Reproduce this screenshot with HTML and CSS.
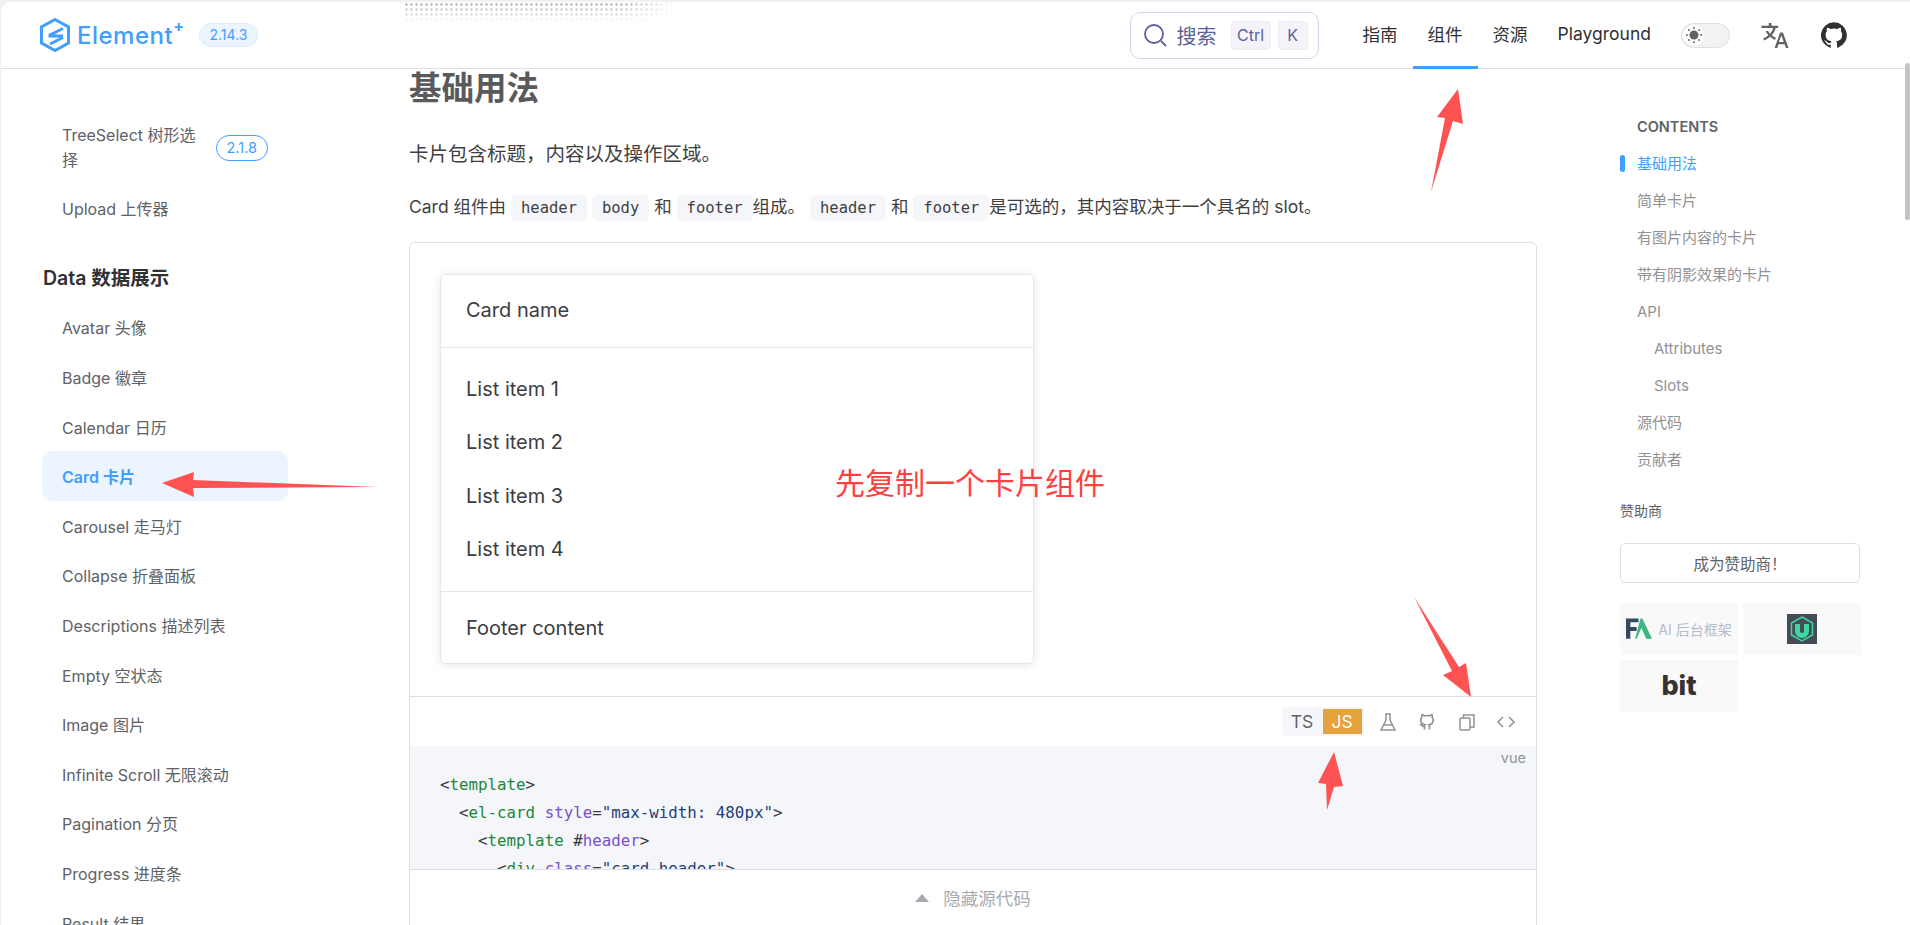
FILE: index.html
```html
<!DOCTYPE html>
<html lang="zh-CN">
<head>
    <meta charset="UTF-8">
    <meta name="viewport" content="width=device-width, initial-scale=1.0">
    <title>Card 卡片 | Element Plus</title>
    <link rel="stylesheet" href="styles.css">
</head>
<body>
    <div class="page">
        <!-- Top navigation -->
        <header class="navbar">
            <div class="brand">
                <svg class="brand-logo" viewBox="0 0 30 34" width="30" height="34" fill="none" stroke="#409eff">
                    <path d="M15 1.500 28.500 9v16L15 32.500 1.500 25V9z" stroke-width="3"/>
                    <path d="M23 10.500 10 17v1h13M23 19.500 10 26" stroke-width="3"/>
                </svg>
                <span class="brand-name">Element<sup>+</sup></span>
                <span class="version">2.14.3</span>
            </div>
            <div class="dots"></div>
            <div class="nav-right">
                <div class="search">
                    <svg viewBox="0 0 24 24" width="24" height="24" fill="none" stroke="#5c5f9e" stroke-width="1.800">
                        <circle cx="11" cy="11" r="9"/>
                        <path d="m18 18 5 5"/>
                    </svg>
                    <span class="search-text">搜索</span>
                    <span class="key key-ctrl">Ctrl</span>
                    <span class="key key-k">K</span>
                </div>
                <nav class="nav-links">
                    <a class="nav-link">指南</a>
                    <a class="nav-link active">组件</a>
                    <a class="nav-link">资源</a>
                    <a class="nav-link">Playground</a>
                </nav>
                <div class="theme-switch">
                    <span class="theme-knob">
                        <svg viewBox="0 0 24 24" width="18" height="18" fill="#606266">
                            <circle cx="12" cy="12" r="6"/>
                            <circle cx="12" cy="2.500" r="1.300"/>
                            <circle cx="12" cy="21.500" r="1.300"/>
                            <circle cx="2.500" cy="12" r="1.300"/>
                            <circle cx="21.500" cy="12" r="1.300"/>
                            <circle cx="5.300" cy="5.300" r="1.300"/>
                            <circle cx="18.700" cy="5.300" r="1.300"/>
                            <circle cx="5.300" cy="18.700" r="1.300"/>
                            <circle cx="18.700" cy="18.700" r="1.300"/>
                        </svg>
                    </span>
                </div>
                <svg class="translate-icon" viewBox="0 0 26 24" width="28" height="25" fill="#606266">
                    <path d="M7 0h2.600v2.600H16v2.200h-2.300c-.7 2.700-2 5-3.700 6.900 1.200 1 2.500 1.900 3.900 2.500l-.9 2.100c-1.700-.8-3.200-1.800-4.600-3-1.700 1.500-3.700 2.700-5.900 3.600l-.8-2.100c1.900-.7 3.600-1.800 5-3.100C5.500 10.500 4.600 9.100 4 7.700h2.400c.5 1 1.100 1.900 1.900 2.700 1.300-1.500 2.300-3.400 2.900-5.600H0V2.600h7z"/>
                    <path d="M18 9h2.600L26 24h-2.500l-1.300-3.700h-5.800L15.100 24h-2.500zm-1.300 9.200h4.700L19.100 12z"/>
                </svg>
                <svg class="github-icon" viewBox="0 0 24 24" width="26" height="26" fill="#303133">
                    <path d="M12 .300a12 12 0 0 0-3.800 23.400c.6.100.8-.3.800-.6v-2.200c-3.300.7-4-1.400-4-1.400-.6-1.400-1.400-1.800-1.400-1.800-1.100-.7.100-.7.100-.7 1.200.1 1.800 1.200 1.800 1.200 1.100 1.800 2.800 1.300 3.500 1 .1-.8.400-1.300.8-1.600-2.700-.3-5.500-1.300-5.500-5.900 0-1.300.5-2.400 1.200-3.200-.1-.3-.5-1.500.1-3.200 0 0 1-.3 3.300 1.200a11.500 11.500 0 0 1 6 0c2.300-1.500 3.300-1.200 3.300-1.200.7 1.700.2 2.900.1 3.200.8.800 1.200 1.900 1.200 3.200 0 4.600-2.800 5.600-5.500 5.900.4.400.8 1.100.8 2.200v3.300c0 .3.200.7.800.6A12 12 0 0 0 12 .300"/>
                </svg>
            </div>
        </header>

        <div class="layout">
            <!-- Component list -->
            <aside class="sidebar">
                <a class="side-item side-item-tag"><span class="side-label">TreeSelect 树形选择</span><span class="side-tag">2.1.8</span></a>
                <a class="side-item">Upload 上传器</a>
                <h3 class="side-title">Data 数据展示</h3>
                <a class="side-item">Avatar 头像</a>
                <a class="side-item">Badge 徽章</a>
                <a class="side-item">Calendar 日历</a>
                <a class="side-item active">Card 卡片</a>
                <a class="side-item">Carousel 走马灯</a>
                <a class="side-item">Collapse 折叠面板</a>
                <a class="side-item">Descriptions 描述列表</a>
                <a class="side-item">Empty 空状态</a>
                <a class="side-item">Image 图片</a>
                <a class="side-item">Infinite Scroll 无限滚动</a>
                <a class="side-item">Pagination 分页</a>
                <a class="side-item">Progress 进度条</a>
                <a class="side-item">Result 结果</a>
            </aside>

            <!-- Doc content -->
            <main class="content">
                <h2 class="doc-title">基础用法</h2>
                <p class="doc-text">卡片包含标题，内容以及操作区域。</p>
                <p class="doc-text doc-text-small">Card 组件由 <code>header</code> <code>body</code> 和 <code>footer</code>组成。 <code>header</code> 和 <code>footer</code>是可选的，其内容取决于一个具名的 slot。</p>

                <div class="demo">
                    <div class="demo-view">
                        <div class="card">
                            <div class="card-header">Card name</div>
                            <div class="card-body">
                                <p>List item 1</p>
                                <p>List item 2</p>
                                <p>List item 3</p>
                                <p>List item 4</p>
                            </div>
                            <div class="card-footer">Footer content</div>
                        </div>
                    </div>
                    <div class="demo-tools">
                        <div class="lang-switch">
                            <span class="lang">TS</span>
                            <span class="lang lang-active">JS</span>
                        </div>
                        <svg class="tool" viewBox="0 0 20 20" width="20" height="20" fill="none" stroke="#8f9298" stroke-width="1.500">
                            <path d="M7 2h6M8 2v6l-5 10h14l-5-10V2M5.500 13h9"/>
                        </svg>
                        <svg class="tool" viewBox="0 0 24 24" width="20" height="20" fill="none" stroke="#8f9298" stroke-width="2">
                            <path d="M9 21v-4c-3.500.8-4.500-1-5-2.500M15 21v-3.500c0-1-.3-1.700-.8-2.200 2.800-.3 5.300-1.500 5.300-5.800 0-1.200-.4-2.300-1.200-3.100.2-.9.200-1.900-.2-3-1 0-2 .4-3.100 1.200a11 11 0 0 0-6 0C7.900 3.800 6.900 3.400 5.900 3.400c-.4 1.100-.4 2.100-.2 3-.8.800-1.200 1.900-1.200 3.100 0 4.300 2.500 5.500 5.300 5.800-.5.500-.8 1.200-.8 2.200"/>
                        </svg>
                        <svg class="tool" viewBox="0 0 20 20" width="20" height="20" fill="none" stroke="#8f9298" stroke-width="1.500">
                            <rect x="3" y="6" width="10" height="12" rx="1"/>
                            <path d="M6.500 6V3H17v12h-4"/>
                        </svg>
                        <svg class="tool" viewBox="0 0 20 20" width="20" height="20" fill="none" stroke="#8f9298" stroke-width="1.500">
                            <path d="M7 5 2 10l5 5M13 5l5 5-5 5"/>
                        </svg>
                    </div>
                    <div class="code-box">
                        <span class="code-lang">vue</span>
<pre class="code"><span class="p">&lt;</span><span class="g">template</span><span class="p">&gt;</span>
  <span class="p">&lt;</span><span class="g">el-card</span> <span class="v">style</span>=<span class="s">"max-width: 480px"</span><span class="p">&gt;</span>
    <span class="p">&lt;</span><span class="g">template</span> #<span class="v">header</span><span class="p">&gt;</span>
      <span class="p">&lt;</span><span class="g">div</span> <span class="v">class</span>=<span class="s">"card-header"</span><span class="p">&gt;</span></pre>
                    </div>
                    <div class="demo-hide">
                        <span class="hide-arrow"></span>
                        <span>隐藏源代码</span>
                    </div>
                </div>
            </main>

            <!-- Right column -->
            <aside class="toc">
                <div class="toc-title">CONTENTS</div>
                <a class="toc-item active">基础用法</a>
                <a class="toc-item">简单卡片</a>
                <a class="toc-item">有图片内容的卡片</a>
                <a class="toc-item">带有阴影效果的卡片</a>
                <a class="toc-item">API</a>
                <a class="toc-item sub">Attributes</a>
                <a class="toc-item sub">Slots</a>
                <a class="toc-item">源代码</a>
                <a class="toc-item">贡献者</a>
                <div class="sponsor-title">赞助商</div>
                <div class="sponsor-btn">成为赞助商！</div>
                <div class="sponsors">
                    <div class="sponsor">
                        <svg viewBox="0 0 28 22" width="27" height="22">
                            <path d="M0 0h13v4H4.500v5H11v4H4.500v8H0z" fill="#34495e"/>
                            <path d="M15 0h2l10 21h-6l-5-11-5 11H9.500z" fill="#3eb780"/>
                        </svg>
                        <span class="sponsor-name">AI 后台框架</span>
                    </div>
                    <div class="sponsor">
                        <svg viewBox="0 0 30 30" width="30" height="30">
                            <rect width="30" height="30" fill="#454b57"/>
                            <path d="M15 3 25.500 9v12L15 27 4.500 21V9z" fill="none" stroke="#3ed6a0" stroke-width="1.500"/>
                            <path d="M8 10h5v7a2 2 0 0 0 4 0v-7h5v7a7 7 0 0 1-14 0z" fill="#3ed6a0"/>
                        </svg>
                    </div>
                    <div class="sponsor"><span class="sponsor-bit">bit</span></div>
                </div>
            </aside>
        </div>

        <div class="scroll-thumb"></div>

        <!-- Red screenshot annotations -->
        <div class="note">先复制一个卡片组件</div>
        <svg class="arrows" viewBox="0 0 1910 925" width="1910" height="925">
            <path d="M1458 89 1463 124 1453 121 1431 192 1445 118 1437 117z"/>
            <path d="M162 483 194 472 193 480 377 487 193 488 194 497z"/>
            <path d="M1471 697 1443 675 1452 671 1414 597 1459 667 1466 663z"/>
            <path d="M1334 752 1343 786 1334 787 1327 810 1326 784 1318 783z"/>
        </svg>
    </div>
</body>
</html>
```

FILE: styles.css
```css
/* General */
* {
    box-sizing: border-box;
}

html,
body {
    margin: 0;
    height: 100%;
    overflow: hidden;
    background: #f1f1f1;
}

body {
    font-family: Inter, "Noto Sans CJK SC", sans-serif;
    color: #303133;
}

.page {
    position: relative;
    width: 1910px;
    height: 925px;
    margin-top: 2px;
    margin-left: 1px;
    background: #fff;
    border-top-left-radius: 10px;
    overflow: hidden;
}

/* Navbar */
.navbar {
    position: relative;
    display: flex;
    align-items: center;
    height: 67px;
    border-bottom: 1px solid #dcdfe6;
    padding-left: 39px;
}

.brand {
    display: flex;
    align-items: center;
}

.brand-name {
    margin-left: 7px;
    font-size: 24px;
    font-weight: 500;
    color: #409eff;
    letter-spacing: 0.5px;
}

.brand-name sup {
    position: relative;
    top: -3px;
    font-size: 16px;
    font-weight: 700;
    line-height: 0;
}

.version {
    margin-left: 14px;
    padding: 3px 10px;
    font-size: 14px;
    line-height: 16px;
    color: #409eff;
    background: #ecf5ff;
    border: 1px solid #d9ecff;
    border-radius: 12px;
}

/* Faded dot strip at the top edge */
.dots {
    position: absolute;
    left: 403px;
    top: 0;
    width: 272px;
    height: 20px;
    background-image: radial-gradient(circle, #b5b5b5 1px, transparent 1.500px);
    background-size: 5px 5px;
    -webkit-mask-image: linear-gradient(to bottom, #000, transparent), linear-gradient(to right, #000 80%, transparent);
    -webkit-mask-composite: source-in;
    mask-image: linear-gradient(to bottom, #000, transparent), linear-gradient(to right, #000 80%, transparent);
    mask-composite: intersect;
}

.nav-right {
    display: flex;
    align-items: center;
    margin-left: auto;
    padding-right: 64px;
    height: 100%;
}

.search {
    display: flex;
    align-items: center;
    width: 189px;
    height: 47px;
    padding: 0 10px 0 12px;
    border: 1px solid #d6d4e8;
    border-radius: 10px;
    color: #5c5f9e;
}

.search-text {
    margin-left: 10px;
    font-size: 20px;
}

.key {
    display: flex;
    align-items: center;
    justify-content: center;
    height: 29px;
    font-size: 16px;
    background: #f4f3f9;
    border: 1px solid #eeedf5;
    border-radius: 4px;
}

.key-ctrl {
    width: 40px;
    margin-left: 14px;
}

.key-k {
    width: 30px;
    margin-left: 7px;
}

.nav-links {
    display: flex;
    height: 100%;
    margin-left: 29px;
}

.nav-link {
    display: flex;
    align-items: center;
    padding: 0 15px 2px;
    font-size: 17.500px;
    color: #303133;
    border-bottom: 3px solid transparent;
    margin-bottom: -1px;
}

.nav-link.active {
    border-bottom-color: #409eff;
}

.theme-switch {
    width: 49px;
    height: 25px;
    margin-left: 15px;
    padding: 1px;
    background: #f2f2f2;
    border: 1px solid #dcdfe6;
    border-radius: 13px;
}

.theme-knob {
    display: flex;
    align-items: center;
    justify-content: center;
    width: 21px;
    height: 21px;
    background: #fff;
    border-radius: 50%;
}

.translate-icon {
    margin-left: 31px;
}

.github-icon {
    margin-left: 32px;
}

/* Layout */
.layout {
    display: flex;
    height: 856px;
    overflow: hidden;
}

.sidebar {
    flex: none;
    width: 408px;
    padding: 43px 121px 0 41px;
}

.side-item {
    display: flex;
    align-items: center;
    height: 49.600px;
    padding-left: 20px;
    font-size: 16px;
    color: #606266;
    border-radius: 10px;
}

.side-item.active {
    color: #409eff;
    font-weight: 600;
    background: #ecf5ff;
}

.side-item-tag {
    height: 71.500px;
    justify-content: space-between;
    padding-right: 20px;
}

.side-label {
    width: 145px;
    line-height: 25px;
}

.side-tag {
    padding: 3px 10px;
    font-size: 14.500px;
    line-height: 18px;
    color: #409eff;
    border: 1px solid #409eff;
    border-radius: 13px;
}

.side-title {
    margin: 0;
    padding: 31px 0 0 1px;
    height: 69.500px;
    font-size: 19.500px;
    font-weight: 600;
    line-height: 28px;
    color: #303133;
}

/* Content */
.content {
    flex: none;
    width: 1128px;
}

.doc-title {
    margin: 0;
    font-size: 32.500px;
    line-height: 40px;
    font-weight: 700;
    color: #5a5a5c;
}

.doc-text {
    margin: 27px 0 0;
    font-size: 19.500px;
    line-height: 36px;
    color: #3f3f42;
}

.doc-text-small {
    margin-top: 20px;
    font-size: 17.500px;
    line-height: 30px;
}

.doc-text code {
    display: inline-block;
    padding: 0 10px;
    font-family: "DejaVu Sans Mono", monospace;
    font-size: 15.500px;
    line-height: 26px;
    background: #f5f6fa;
    border-radius: 5px;
}

.demo {
    margin-top: 20px;
    border: 1px solid #dcdfe6;
    border-radius: 5px;
    height: 760px;
}

.demo-view {
    height: 453px;
    padding: 31px 30px;
}

.card {
    width: 594px;
    height: 390px;
    border: 1px solid #e4e7ed;
    border-radius: 5px;
    box-shadow: 0 1px 8px rgba(0, 0, 0, 0.1);
    font-size: 20px;
    color: #3c3d41;
}

.card-header {
    display: flex;
    align-items: center;
    height: 73px;
    padding: 0 0 2px 25px;
    border-bottom: 1px solid #e4e7ed;
}

.card-body {
    height: 243px;
    padding: 15px 25px 0;
}

.card-body p {
    margin: 0;
    line-height: 53.400px;
}

.card-footer {
    display: flex;
    align-items: center;
    height: 72px;
    padding-left: 25px;
    border-top: 1px solid #e4e7ed;
}

.demo-tools {
    display: flex;
    align-items: center;
    height: 50px;
    padding-right: 20px;
    justify-content: flex-end;
    border-top: 1px solid #dcdfe6;
}

.lang-switch {
    display: flex;
    align-items: center;
    height: 29px;
    padding-right: 2px;
    background: #f5f6fa;
    border-radius: 4px;
}

.lang {
    display: flex;
    align-items: center;
    justify-content: center;
    width: 41px;
    height: 25px;
    font-size: 17.500px;
    color: #606266;
}

.lang-active {
    width: 39px;
    color: #fff;
    background: #e6a23c;
}

.tool {
    margin-left: 19.500px;
}

.lang-switch + .tool {
    margin-left: 14px;
}

.code-box {
    position: relative;
    height: 123px;
    overflow: hidden;
    background: #f5f6fa;
}

.code-lang {
    position: absolute;
    right: 10px;
    top: 3px;
    font-size: 14.500px;
    color: #929295;
}

.code {
    margin: 0;
    padding: 25px 30px;
    font-family: "DejaVu Sans Mono", monospace;
    font-size: 15.800px;
    line-height: 28px;
    color: #383a42;
}

.code .p {
    color: #383a42;
}

.code .g {
    color: #22863a;
}

.code .v {
    color: #7a50c7;
}

.code .s {
    color: #1f3f77;
}

.demo-hide {
    display: flex;
    align-items: center;
    justify-content: center;
    gap: 14px;
    height: 56px;
    font-size: 17.500px;
    color: #a8abb2;
    border-top: 1px solid #dcdfe6;
}

.hide-arrow {
    width: 0;
    height: 0;
    border-left: 7px solid transparent;
    border-right: 7px solid transparent;
    border-bottom: 8px solid #a8abb2;
}

/* Contents column */
.toc {
    flex: none;
    width: 260px;
    margin-left: 83px;
    font-size: 15px;
}

.toc-title {
    margin-top: 46px;
    padding-left: 17px;
    font-size: 14.500px;
    line-height: 24px;
    font-weight: 600;
    color: #606266;
}

.toc-item {
    display: block;
    padding-left: 17px;
    margin-top: 8.100px;
    line-height: 29px;
    color: #929295;
}

.toc-title + .toc-item {
    margin-top: 9.500px;
}

.toc-item.active {
    position: relative;
    color: #409eff;
}

.toc-item.active::before {
    content: "";
    position: absolute;
    left: 0;
    top: 6px;
    width: 5px;
    height: 17px;
    background: #409eff;
    border-radius: 3px;
}

.toc-item.sub {
    padding-left: 34px;
}

.sponsor-title {
    margin-top: 24.500px;
    font-size: 14px;
    line-height: 24px;
    color: #606266;
}

.sponsor-btn {
    width: 240px;
    height: 40px;
    margin-top: 20px;
    display: flex;
    align-items: center;
    justify-content: center;
    font-size: 15.500px;
    color: #606266;
    border: 1px solid #dcdfe6;
    border-radius: 5px;
}

.sponsors {
    display: grid;
    grid-template-columns: 118px 118px;
    grid-auto-rows: 52px;
    gap: 5px;
    margin-top: 20px;
}

.sponsor {
    display: flex;
    align-items: center;
    justify-content: center;
    gap: 5px;
    background: #f9f9f9;
}

.sponsor-name {
    font-size: 14px;
    color: #b4bccc;
    white-space: nowrap;
}

.sponsor-bit {
    font-size: 27px;
    font-weight: 800;
    color: #333;
}

/* Scrollbar thumb */
.scroll-thumb {
    position: absolute;
    right: 1px;
    top: 61px;
    width: 5px;
    height: 157px;
    background: #c4c4c4;
    border-radius: 3px;
}

/* Annotations */
.note {
    position: absolute;
    left: 834px;
    top: 461px;
    font-size: 30px;
    line-height: 40px;
    color: #ff4040;
    white-space: nowrap;
}

.arrows {
    position: absolute;
    left: -1px;
    top: -2px;
    pointer-events: none;
}

.arrows path {
    fill: #ff5252;
}
```
